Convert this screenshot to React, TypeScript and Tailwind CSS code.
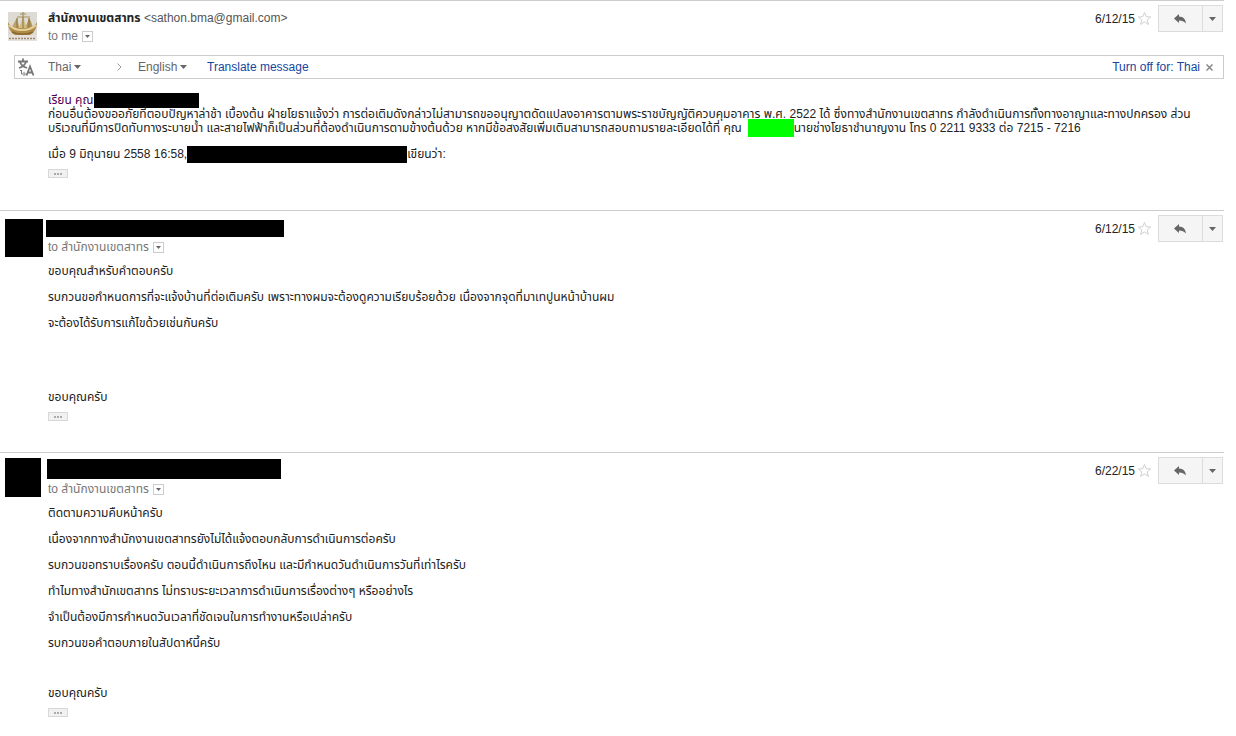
import type { ReactNode } from "react";

function Caret({ className = "" }: { className?: string }) {
  return (
    <svg className={`h-1 w-[7px] shrink-0 ${className}`} viewBox="0 0 7 4" fill="currentColor" aria-hidden="true">
      <path d="M0 0h7L3.5 4z" />
    </svg>
  );
}

function BoatAvatar() {
  return (
    <svg className="mt-[11px] ml-2 h-[29px] w-[29px]" viewBox="0 0 29 29" aria-label="สำนักงานเขตสาทร">
      <rect width="29" height="29" fill="#dedbd5" />
      <rect y="23" width="29" height="6" fill="#e6e1da" />
      <path d="M12 2h6M15 0v6M9 5h13" stroke="#a5935f" strokeWidth="1.2" fill="none" />
      <path d="M9 6C7 9 5 12 4 16h8c-2-4-2-7-3-10z" fill="#bda468" />
      <path d="M21 6c2 3 3 6 4 10h-8c2-4 3-7 4-10z" fill="#b2965a" />
      <path d="M15 5l-4 11h8z" fill="#d2bd84" />
      <path d="M15 5v11M9 6v10M21 6v10" stroke="#8a7340" strokeWidth="1" fill="none" />
      <path d="M0 10c2 4 6 6 14 6s13-2 15-6c0 6-3 11-7 13H7C3 21 0 16 0 10z" fill="#b08b48" />
      <path d="M1 13c4 4 8 5 13 5s10-1 14-5" stroke="#e6d19a" strokeWidth="2" fill="none" />
      <path d="M4 20c6 3 15 3 21 0" stroke="#86682f" strokeWidth="1.5" fill="none" />
      <path d="M1 26.5h27" stroke="#9a8a74" strokeWidth="1.5" strokeDasharray="2 1" />
    </svg>
  );
}

function MessageActions({ date }: { date: string }) {
  return (
    <div className="mr-px flex shrink-0 items-center pt-1 text-[#222]">
      <span>{date}</span>
      <button type="button" aria-label="Star" className="ml-0.5 text-[#d0d0d0]">
        <svg className="h-[15px] w-[15px]" viewBox="0 0 15 15" fill="none" stroke="currentColor">
          <path d="M7.5 1.5l1.7 4.2 4.5.3-3.5 2.9 1.2 4.5-3.9-2.5-3.9 2.5 1.2-4.5L1.3 6l4.5-.3z" />
        </svg>
      </button>
      <div className="ml-1.5 flex h-[27px] border border-[#dcdcdc] bg-[#f5f5f5] text-[#666]">
        <button type="button" aria-label="Reply" className="flex w-11 items-center justify-center border-r border-[#dcdcdc] pr-0.5">
          <svg className="h-[10px] w-[12px]" viewBox="0 0 12 10" fill="currentColor">
            <path d="M5 0v2.6c4 .2 6.5 2.4 7 7C10.3 7.4 8 6.5 5 6.5V9L0 4.5z" />
          </svg>
        </button>
        <button type="button" aria-label="More" className="flex w-[19px] items-center justify-center">
          <Caret />
        </button>
      </div>
    </div>
  );
}

function DetailsButton() {
  return (
    <button
      type="button"
      aria-label="Show details"
      className="ml-1 flex h-[11px] w-[11px] items-center justify-center border border-[#ccc] text-[#666]"
    >
      <svg className="h-[3px] w-[5px]" viewBox="0 0 5 3" fill="currentColor">
        <path d="M0 0h5L2.5 3z" />
      </svg>
    </button>
  );
}

function TrimmedButton() {
  return (
    <button
      type="button"
      aria-label="Show trimmed content"
      className="mt-0.5 flex h-[9px] w-5 items-center justify-center gap-px border border-[#d8d8d8] bg-[#f1f1f1]"
    >
      <i className="h-0.5 w-0.5 bg-[#aaa]" />
      <i className="h-0.5 w-0.5 bg-[#aaa]" />
      <i className="h-0.5 w-0.5 bg-[#aaa]" />
    </button>
  );
}

function LanguageSelect({ label, value }: { label: string; value: string }) {
  return (
    <label className="flex items-center">
      <select aria-label={label} defaultValue={value} className="appearance-none bg-transparent">
        <option>{value}</option>
      </select>
      <Caret className="ml-0.5" />
    </label>
  );
}

function TranslateBar() {
  return (
    <div className="ml-3.5 flex h-6 items-center border border-[#ccc] pr-2.5 text-[#666]">
      <svg className="ml-0.5 h-5 w-[18px] shrink-0" viewBox="0 0 18 20" fill="none" stroke="#777" strokeWidth="1.8" aria-hidden="true">
        <path d="M1 4.5h10M6 1.5v3M3 5c1 3 4 5 7 6M9 5c-1 3-4 5-7 6" />
        <path d="M9.5 18.5l3.5-9 3.5 9M10.5 15.5h5" />
        <path d="M3 13.5h2M4.5 13v4h3M6.5 15L8.5 17l-2 2" strokeWidth="1" />
      </svg>
      <div className="ml-[13px] w-[69px]">
        <LanguageSelect label="From" value="Thai" />
      </div>
      <svg className="h-2 w-[5px]" viewBox="0 0 5 8" fill="none" stroke="#999" aria-hidden="true">
        <path d="M.5.5L4 4 .5 7.5" />
      </svg>
      <div className="ml-4">
        <LanguageSelect label="To" value="English" />
      </div>
      <a href="#translate" className="ml-5 text-[#15479e]">Translate message</a>
      <a href="#turn-off" className="ml-auto text-[#15479e]">Turn off for: Thai</a>
      <button type="button" aria-label="Close" className="ml-1.5 text-[#888]">
        <svg className="h-[7px] w-[7px]" viewBox="0 0 7 7" stroke="currentColor" strokeWidth="1.5">
          <path d="M.5.5l6 6M6.5.5l-6 6" />
        </svg>
      </button>
    </div>
  );
}

interface ReplyProps {
  date: string;
  avatar: ReactNode;
  sender: ReactNode;
  lines: string[];
  closingClass: string;
}

function Reply({ date, avatar, sender, lines, closingClass }: ReplyProps) {
  return (
    <article className="border-t border-[#ccc] pb-[31px]">
      <header className="flex h-[47px]">
        <div className="w-12 shrink-0">{avatar}</div>
        <div className="flex-1">
          <div className="-ml-0.5 flex h-7 items-center">{sender}</div>
          <div className="flex h-4 items-center text-[#777]">
            to สำนักงานเขตสาทร
            <DetailsButton />
          </div>
        </div>
        <div>
          <MessageActions date={date} />
        </div>
      </header>
      <div className="ml-12 leading-[26px]">
        {lines.map((line) => (
          <p key={line}>{line}</p>
        ))}
        <p className={closingClass}>ขอบคุณครับ</p>
        <TrimmedButton />
      </div>
    </article>
  );
}

export default function App() {
  return (
    <main className="bg-white pr-3 font-['Liberation_Sans','Noto_Sans_Thai',sans-serif] text-xs leading-[14px] text-[#222]">
      <article className="border-t border-[#ccc] pb-8">
        <header className="flex h-[54px]">
          <div className="w-12 shrink-0">
            <BoatAvatar />
          </div>
          <div className="flex-1">
            <div className="mt-2.5 text-[#555]">
              <b className="text-[#222]">สำนักงานเขตสาทร</b> &lt;sathon.bma@gmail.com&gt;
            </div>
            <div className="mt-1 flex items-center text-[#777]">
              to me
              <DetailsButton />
            </div>
          </div>
          <div>
            <MessageActions date="6/12/15" />
          </div>
        </header>
        <TranslateBar />
        <div className="mt-3.5 ml-12">
          <div className="flex h-3.5 items-center">
            <span className="text-[#500050]">เรียน คุณ</span>
            <span className="ml-px h-[15px] w-[105px] bg-black" />
          </div>
          <p>
            ก่อนอื่นต้องขออภัยที่ตอบปัญหาล่าช้า เบื้องต้น ฝ่ายโยธาแจ้งว่า การต่อเติมดังกล่าวไม่สามารถขออนุญาตดัดแปลงอาคารตามพระราชบัญญัติควบคุมอาคาร พ.ศ. 2522 ได้ ซึ่งทางสำนักงานเขตสาทร กำลังดำเนินการทั้งทางอาญาและทางปกครอง ส่วน
          </p>
          <div className="flex h-3.5 items-center">
            บริเวณที่มีการปิดทับทางระบายน้ำ และสายไฟฟ้าก็เป็นส่วนที่ต้องดำเนินการตามข้างต้นด้วย หากมีข้อสงสัยเพิ่มเติมสามารถสอบถามรายละเอียดได้ที่ คุณ
            <span className="ml-1.5 h-[18px] w-[46px] bg-[#00ff00]" />
            นายช่างโยธาชำนาญงาน โทร 0 2211 9333 ต่อ 7215 - 7216
          </div>
          <div className="mt-3 mb-2 flex h-3.5 items-center">
            เมื่อ 9 มิถุนายน 2558 16:58,
            <span className="h-[17px] w-[220px] bg-black" />
            เขียนว่า:
          </div>
          <TrimmedButton />
        </div>
      </article>

      <Reply
        date="6/12/15"
        avatar={<div className="mt-2 ml-[5px] h-[38px] w-[38px] bg-black" />}
        sender={<div className="mt-1.5 h-[17px] w-[238px] bg-black" />}
        lines={[
          "ขอบคุณสำหรับคำตอบครับ",
          "รบกวนขอกำหนดการที่จะแจ้งบ้านที่ต่อเติมครับ เพราะทางผมจะต้องดูความเรียบร้อยด้วย เนื่องจากจุดที่มาเทปูนหน้าบ้านผม",
          "จะต้องได้รับการแก้ไขด้วยเช่นกันครับ",
        ]}
        closingClass="mt-12"
      />
      <Reply
        date="6/22/15"
        avatar={<div className="mt-[5px] ml-[5px] h-[39px] w-9 bg-black" />}
        sender={<div className="mt-1 ml-px h-5 w-[234px] bg-black" />}
        lines={[
          "ติดตามความคืบหน้าครับ",
          "เนื่องจากทางสำนักงานเขตสาทรยังไม่ได้แจ้งตอบกลับการดำเนินการต่อครับ",
          "รบกวนขอทราบเรื่องครับ ตอนนี้ดำเนินการถึงไหน และมีกำหนดวันดำเนินการวันที่เท่าไรครับ",
          "ทำไมทางสำนักเขตสาทร ไม่ทราบระยะเวลาการดำเนินการเรื่องต่างๆ หรืออย่างไร",
          "จำเป็นต้องมีการกำหนดวันเวลาที่ชัดเจนในการทำงานหรือเปล่าครับ",
          "รบกวนขอคำตอบภายในสัปดาห์นี้ครับ",
        ]}
        closingClass="mt-6"
      />
    </main>
  );
}
